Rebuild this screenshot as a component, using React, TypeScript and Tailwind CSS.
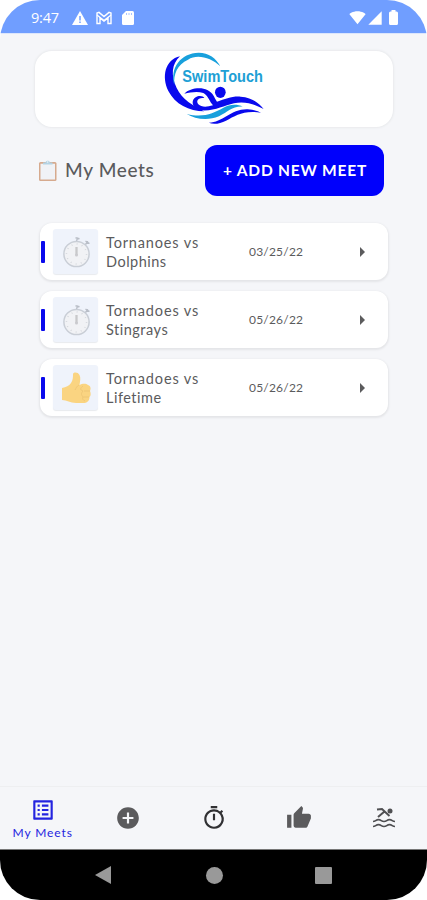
import React from "react";
import {
  MdAddCircle,
  MdArrowRight,
  MdListAlt,
  MdSignalCellular4Bar,
  MdSignalWifi4Bar,
  MdThumbUp,
  MdOutlineTimer,
  MdWarning,
} from "react-icons/md";

function MailIcon() {
  return (
    <svg viewBox="0 0 16 14" className="h-[14px] w-4" fill="none" stroke="white">
      <path d="M1 12.500V2l2-.6 5 4.200 5-4.200 2 .6v10.500h-3V7L8 10 4 7v5.500z" strokeWidth="1.400" />
      <path d="M1 4l7 5.500L15 4" strokeWidth="1.200" />
    </svg>
  );
}

function StorageIcon() {
  return (
    <svg viewBox="0 0 12 14" className="h-[14px] w-3">
      <path d="M4 0h6.500Q12 0 12 1.500v11Q12 14 10.500 14h-9Q0 14 0 12.500V4z" fill="white" />
      <path d="M4.500 2v2M7 2v2M9.500 2v2" stroke="#a9c4ff" strokeWidth="1" />
    </svg>
  );
}

function BatteryIcon() {
  return (
    <svg viewBox="0 0 9 15" className="h-[15px] w-[9px]" fill="white">
      <path d="M2.500 0h4v1.500h1Q9 1.500 9 3v10.500Q9 15 7.500 15h-6Q0 15 0 13.500V3q0-1.500 1.500-1.500h1z" />
    </svg>
  );
}

function SwimmerIcon() {
  return (
    <svg viewBox="0 0 24 24" className="h-6 w-6" fill="none" stroke="#505053">
      <path d="M5 3.500l5-.5 7.500 7M6 11l6.500-5.500" strokeWidth="2" />
      <circle cx="18" cy="5" r="2.500" fill="#505053" stroke="none" />
      <path d="M1 15.500c2.700 0 2.700-1.800 5.500-1.800s2.700 1.800 5.500 1.800 2.700-1.800 5.500-1.800 2.700 1.800 5.500 1.800M1 20.500c2.700 0 2.700-1.800 5.500-1.800s2.700 1.800 5.500 1.800 2.700-1.800 5.500-1.800 2.700 1.800 5.500 1.800" strokeWidth="1.700" />
    </svg>
  );
}

function SwimLogo() {
  return (
    <svg viewBox="0 0 390 270" className="h-[90px] w-[130px]">
      <path d="M90 37C45 47 34 99 55 141C75 180 117 202 163 202C130 186 96 166 80 132C62 94 65 60 90 37Z" fill="#0909ed" />
      <path d="M73 123C59 72 92 27 146 26C176 26 199 43 211 67C183 42 143 29 114 47C82 62 70 89 73 123Z" fill="#18a0dc" />
      <g transform="translate(97 113) scale(.84 1)">
        <text x="0" y="0" fontFamily="Liberation Sans, sans-serif" fontWeight="700" fontSize="52" textLength="288" lengthAdjust="spacing" fill="#209fd5">SwimTouch</text>
      </g>
      <path d="M103 149C117 134 151 128 172 138C190 147 192 160 201 173C226 165 246 156 272 158C306 160 327 178 341 195C311 180 284 171 252 178C221 185 194 202 154 199C126 194 121 170 137 160C147 153 161 157 163 162C144 161 137 171 145 181C154 190 170 190 189 184C179 173 173 153 160 147C142 141 122 145 103 149Z" fill="#0909ed" />
      <ellipse cx="211" cy="145" rx="16" ry="17" fill="#0909ed" />
      <path d="M110 210C160 222 190 208 219 192C240 180 261 180 279 188C246 186 235 204 207 217C172 232 135 225 110 210Z" fill="#18a0dc" />
      <path d="M176 236C216 237 244 194 293 196C310 197 323 201 333 206C280 198 257 215 228 230C209 240 190 242 176 236Z" fill="#0909ed" />
    </svg>
  );
}

function Clipboard() {
  return (
    <svg viewBox="0 0 20 22" className="h-[22px] w-5">
      <rect x="1" y="2" width="17.500" height="19" rx="1.500" fill="#d6aa8e" />
      <path d="M2.500 3.700h14.500v15.800h-14.500z" fill="#f0f2f6" />
      <path d="M5 4.500V2.500h2.500C8 .2 11.500.2 12 2.500h2.500v2z" fill="#b4d3e4" />
      <circle cx="9.700" cy="2" r=".7" fill="#f5f6f9" />
    </svg>
  );
}

function Stopwatch() {
  return (
    <svg viewBox="0 0 30 34" className="h-[34px] w-[30px]" fill="none">
      <path d="M15.500 6L16.800 2.500M14.500 2.800l4 1M24 10l3-3.500M24.500 6.200l4 2.300" stroke="#b9bec7" strokeWidth="1.400" />
      <circle cx="15.500" cy="19" r="12.600" fill="#f1f2f5" stroke="#c9ced6" strokeWidth="1.500" />
      <circle cx="15.500" cy="19" r="10" stroke="#cccfd5" strokeDasharray=".7 4.530" strokeWidth="1.500" />
      <path d="M15.500 12v8" stroke="#c8c8ca" strokeWidth="2.300" />
      <circle cx="15.500" cy="20" r="1.500" fill="#cacace" />
    </svg>
  );
}

function GoldThumb() {
  return (
    <svg viewBox="0 0 32 34" className="h-[34px] w-8">
      <path d="M2 17C6 16 9 15 11 12C13 9 13 6 13 3C13 1 18 .5 19.500 4C21 7 20 10 19.500 14C22 12.500 26 12 28 14C31 15 31 18 30 20C31 22 31 25 29.500 26C29.500 30 27 32 23 32H16C10 32 7 29 2 29Z" fill="#fad481" />
      <path d="M19 14c-2 1-3 3-4 5M30 20h-6M29 26h-6M23 15c-3 2-3 4 0 5c-2 2-2 4 0 6c-1 2 0 3 2 4" fill="none" stroke="#edc575" strokeWidth=".9" />
    </svg>
  );
}

const meets = [
  { team: "Tornanoes vs", opponent: "Dolphins", date: "03/25/22", done: false },
  { team: "Tornadoes vs", opponent: "Stingrays", date: "05/26/22", done: false },
  { team: "Tornadoes vs", opponent: "Lifetime", date: "05/26/22", done: true },
];

export default function App() {
  return (
    <div className="flex h-[900px] w-[427px] flex-col overflow-hidden rounded-[40px] bg-[#f5f6f9] font-['Lato',sans-serif] text-[#5b5b5d]">
      <header className="flex h-[33px] shrink-0 items-center bg-[#709eff] pt-[2px] pr-[29px] pl-[31px] text-white">
        <span className="w-[41px] font-['Open_Sans',sans-serif] text-[14.500px] tracking-[-0.2px]">9:47</span>
        <svg viewBox="0 0 16 14" className="h-[14px] w-4">
          <path d="M8 0l8 14H0z" fill="white" />
          <path d="M8 5v4.500M8 10.500v1.500" stroke="#709eff" strokeWidth="1.500" />
        </svg>
        <span className="ml-2"><MailIcon /></span>
        <span className="ml-[10px]"><StorageIcon /></span>
        <MdSignalWifi4Bar size={17} className="ml-auto" />
        <MdSignalCellular4Bar size={16} className="ml-px" />
        <span className="ml-[6px]"><BatteryIcon /></span>
      </header>
      <div className="h-px shrink-0 bg-[#dce6fc]" />

      <main className="flex-1 pt-[17px]">
        <div className="mr-[34px] ml-[35px] flex h-[76px] items-center rounded-[17px] bg-white pl-[115px] shadow-[0_0_2px_1px_#e9eaed]">
          <SwimLogo />
        </div>
        <div className="mt-[18px] mr-[43px] ml-[38px] flex h-[51px] items-center justify-between">
          <div className="flex items-center gap-[7px]">
            <Clipboard />
            <h1 className="text-[19px] font-medium tracking-[0.65px]">My Meets</h1>
          </div>
          <button className="h-[51px] w-[179px] rounded-[12px] bg-[#0000fc] pl-px text-[15.500px] font-bold tracking-[0.8px] whitespace-nowrap text-white">+ ADD NEW MEET</button>
        </div>
        <div className="mt-[27px] mr-[39px] ml-[40px] flex flex-col gap-[11px]">
          {meets.map((meet, index) => (
            <div key={index} className="flex h-[57px] items-center rounded-[12px] bg-white pl-px shadow-[0_1px_2px_1px_#e4e5e8]">
              <div className="h-[22px] w-[4px] rounded-[1px] bg-[#0909ed]" />
              <div className="ml-[8px] flex h-[45px] w-[45px] items-center justify-center rounded-[3px] bg-[#eff3fb] shadow-[0_1px_1px_#e8eaee]">
                {meet.done ? <GoldThumb /> : <Stopwatch />}
              </div>
              <div className="ml-[8px] w-[143px] pt-[2px] text-[14.500px] leading-[18.500px] tracking-[0.85px]">
                <div>{meet.team}</div>
                <div className="tracking-[0.5px]">{meet.opponent}</div>
              </div>
              <span className="w-[101px] text-[12px] tracking-[0.2px]">{meet.date}</span>
              <MdArrowRight size={24} />
            </div>
          ))}
        </div>
      </main>

      <nav className="flex h-[63px] shrink-0 items-center border-t border-[#eeeff1] pb-px">
        <div className="flex flex-1 flex-col items-center pt-[1px] text-[#2424df]">
          <MdListAlt size={26} />
          <span className="mt-[3px] text-[12px] leading-[14px] tracking-[0.9px]">My Meets</span>
        </div>
        <div className="flex flex-1 justify-center"><MdAddCircle size={26} /></div>
        <div className="flex flex-1 justify-center text-[#303033]"><MdOutlineTimer size={26} /></div>
        <div className="flex flex-1 justify-center"><MdThumbUp size={26} /></div>
        <div className="flex flex-1 justify-center"><SwimmerIcon /></div>
      </nav>
      <div className="h-px shrink-0 bg-[#777]" />
      <footer className="flex h-[50px] shrink-0 items-center bg-black pl-[95px]">
        <svg viewBox="0 0 16 18" className="h-[18px] w-4" fill="#999"><path d="M16 0v18L0 9z" /></svg>
        <div className="ml-[95px] h-[17px] w-[17px] rounded-full bg-[#999]" />
        <div className="ml-[92px] h-[17px] w-[17px] rounded-[1px] bg-[#999]" />
      </footer>
    </div>
  );
}
